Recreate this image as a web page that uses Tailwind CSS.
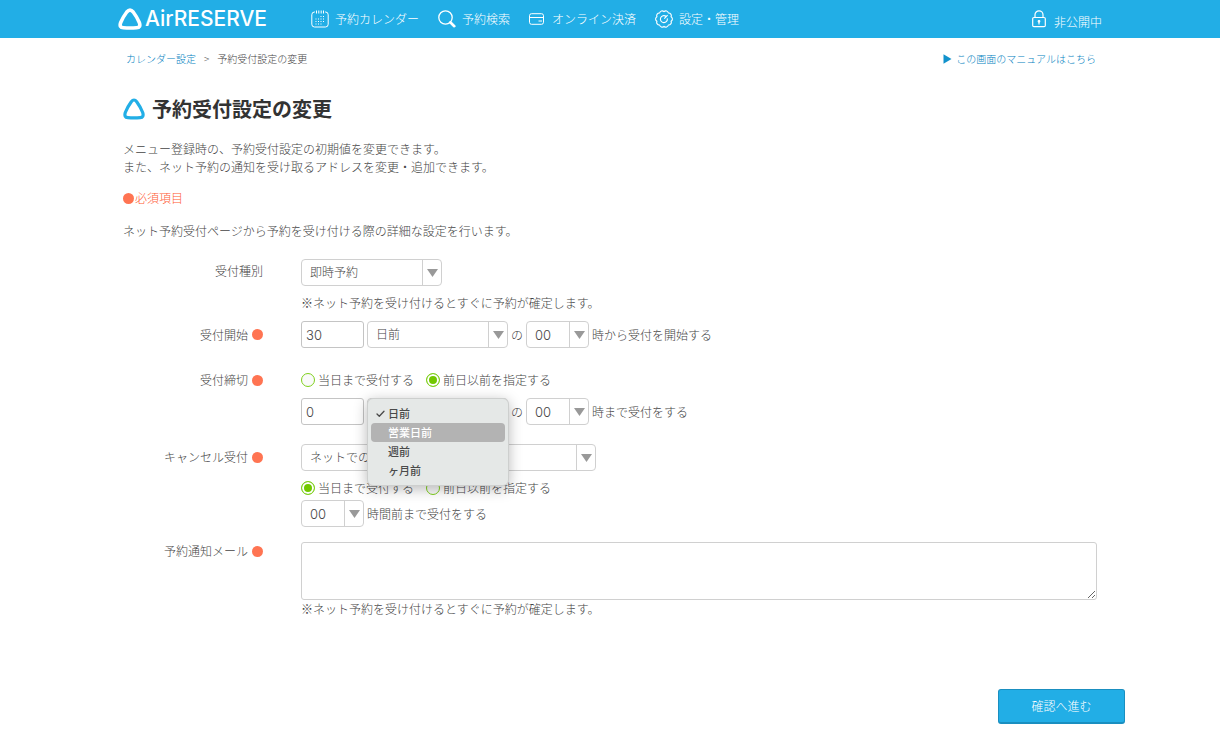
<!DOCTYPE html>
<html lang="ja">
<head>
<meta charset="utf-8">
<meta name="viewport" content="width=device-width, initial-scale=1">
<title>予約受付設定の変更 | AirRESERVE</title>
<script src="https://cdn.jsdelivr.net/npm/@tailwindcss/browser@4"></script>
</head>
<body class="bg-white font-['Noto_Sans_CJK_JP',sans-serif] text-[12px] leading-[18px] font-light text-[#444]">

<header class="bg-[#22aee6] text-white">
  <div class="mx-auto flex h-[38px] max-w-[984px] items-center">
    <a href="#" class="flex items-center gap-[3px]" aria-label="AirRESERVE">
      <svg class="h-[22px] w-6" viewBox="0 0 24 22" fill="none" stroke="currentColor" stroke-width="3.6" stroke-linejoin="round"><path d="M8.800 4Q12 .2 15.200 4Q19 9 21.300 14.500Q23.200 19.500 18.500 19.800Q12 20.300 5.500 19.800Q.8 19.500 2.700 14.500Q5 9 8.800 4Z"/></svg>
      <span class="font-['Inter'] text-[21px] leading-[24px] font-medium">AirRESERVE</span>
    </a>
    <nav class="ml-11 flex items-center gap-[19px] whitespace-nowrap">
      <a href="#" class="flex items-center gap-[6px]">
        <svg class="h-[18px] w-[18px]" viewBox="0 0 18 18" fill="none" stroke="currentColor" stroke-width="1"><path d="M4 2H3.500Q.8 2 .8 4.800V14.200Q.8 17 3.500 17H14.500Q17.200 17 17.200 14.200V4.800Q17.200 2 14.500 2H14"/><path d="M5.500 .5V3.500M7.800 .5V3.500M10.200 .5V3.500M12.500 .5V3.500"/><path d="M9.500 6.500H14M4.500 9H14M4.500 11.500H14M4.500 14H12" stroke-dasharray="1 1.500"/></svg>
        予約カレンダー</a>
      <a href="#" class="flex items-center gap-[6px]">
        <svg class="h-[18px] w-[18px]" viewBox="0 0 18 18" fill="none" stroke="currentColor"><circle cx="7.500" cy="7.500" r="6.700" stroke-width="1.300"/><path d="M12.300 12.300L16.300 16.200" stroke-width="2.600" stroke-linecap="round"/></svg>
        予約検索</a>
      <a href="#" class="flex items-center gap-[6px]">
        <svg class="h-[12px] w-[17px]" viewBox="0 0 17 12" fill="none" stroke="currentColor" stroke-width="1"><rect x=".5" y=".7" width="14" height="10.600" rx="2"/><path d="M.5 4.500H14.500M9.500 8H13"/></svg>
        オンライン決済</a>
      <a href="#" class="flex items-center gap-[6px]">
        <svg class="h-[18px] w-[18px]" viewBox="0 0 18 18" fill="none" stroke="currentColor" stroke-width="1.100" stroke-linejoin="round"><path d="M9 1.600A2.600 2.600 0 0 1 13.350 3.010A2.600 2.600 0 0 1 16.040 6.710A2.600 2.600 0 0 1 16.040 11.290A2.600 2.600 0 0 1 13.350 14.990A2.600 2.600 0 0 1 9 16.400A2.600 2.600 0 0 1 4.650 14.990A2.600 2.600 0 0 1 1.960 11.290A2.600 2.600 0 0 1 1.960 6.710A2.600 2.600 0 0 1 4.650 3.010A2.600 2.600 0 0 1 9 1.600Z"/><path d="M11 6.300A3.500 3.500 0 1 0 12.300 8.300M9.300 8.700L12.600 5.200"/></svg>
        設定・管理</a>
    </nav>
    <a href="#" class="ml-auto flex items-center gap-2 whitespace-nowrap">
      <svg class="h-[18px] w-[14px]" viewBox="0 0 14 18" fill="none" stroke="currentColor" stroke-width="1.200"><rect x=".7" y="7.500" width="12.600" height="9.200" rx="1.200"/><path d="M3 7.500V4.800A4 4 0 0 1 11 4.800V7.500"/><path d="M7 12V14.500"/><circle cx="7" cy="11.300" r=".8" fill="currentColor"/></svg>
      <span class="pt-[6px]">非公開中</span></a>
  </div>
</header>

<main class="mx-auto max-w-[974px]">
  <div class="flex items-center justify-between pt-[11px] pr-px pl-[3px] text-[10px] leading-[20px]">
    <nav class="flex gap-2" aria-label="パンくず">
      <a href="#" class="text-[#0080c0]">カレンダー設定</a><span>&gt;</span><span>予約受付設定の変更</span>
    </nav>
    <a href="#" class="flex items-center gap-1 text-[#0080c0]">
      <svg class="h-[10px] w-[9px]" viewBox="0 0 9 10" fill="#1292cc"><path d="M.5 .3L8.500 5L.5 9.700Z"/></svg>この画面のマニュアルはこちら</a>
  </div>

  <h1 class="mt-[25px] flex items-center gap-[7px] text-[20px] leading-[30px] font-bold text-[#333]">
    <svg class="h-[22px] w-[22px] text-[#22aee6]" viewBox="0 0 22 22" fill="none" stroke="currentColor" stroke-width="3.200" stroke-linejoin="round"><path d="M8.300 3.800Q11 .2 13.700 3.800Q17.500 9 19.700 14.500Q21.200 19.300 17.200 19.600Q11 20.100 4.800 19.600Q.8 19.300 2.300 14.500Q4.500 9 8.300 3.800Z"/></svg>
    予約受付設定の変更
  </h1>

  <p class="mt-4">メニュー登録時の、予約受付設定の初期値を変更できます。<br>また、ネット予約の通知を受け取るアドレスを変更・追加できます。</p>
  <p class="mt-[13px] flex items-center gap-px text-[#ff5a34]"><span class="h-[11px] w-[11px] rounded-full bg-[#ff7452]"></span>必須項目</p>
  <p class="mt-[15px]">ネット予約受付ページから予約を受け付ける際の詳細な設定を行います。</p>

  <form id="settings" class="mt-[19px]">
    <div class="grid grid-cols-[140px_1fr] gap-x-[38px]">
      <label for="type" class="text-right leading-[24px]">受付種別</label>
      <div>
        <div class="relative w-[141px]">
          <select id="type" class="block h-[27px] w-full appearance-none rounded-[4px] border border-[#d0d0d0] bg-white pb-px pl-2"><option>即時予約</option></select>
          <span class="pointer-events-none absolute inset-y-px right-px flex w-[19px] items-center justify-center border-l border-[#d0d0d0]"><svg class="h-2 w-[11px]" viewBox="0 0 11 8" fill="#999"><path d="M0 0H11L5.500 8Z"/></svg></span>
        </div>
        <p class="mt-2">※ネット予約を受け付けるとすぐに予約が確定します。</p>
      </div>
    </div>

    <div class="mt-[9px] grid grid-cols-[140px_1fr] gap-x-[38px]">
      <label for="start-num" class="flex h-[27px] items-center justify-end gap-1">受付開始<span class="h-[11px] w-[11px] rounded-full bg-[#ff7452]"></span></label>
      <div class="flex items-center gap-[3px]">
        <input id="start-num" type="text" value="30" class="h-[27px] w-[63px] rounded-[3px] border border-[#c4c4c4] pl-1 font-['Inter'] text-[13px]">
        <div class="relative w-[141px]">
          <select aria-label="受付開始の単位" class="block h-[27px] w-full appearance-none rounded-[4px] border border-[#d0d0d0] bg-white pb-px pl-2"><option>日前</option></select>
          <span class="pointer-events-none absolute inset-y-px right-px flex w-[19px] items-center justify-center border-l border-[#d0d0d0]"><svg class="h-2 w-[11px]" viewBox="0 0 11 8" fill="#999"><path d="M0 0H11L5.500 8Z"/></svg></span>
        </div>
        <span>の</span>
        <div class="relative w-[63px]">
          <select id="start-hour" class="block h-[27px] w-full appearance-none rounded-[4px] border border-[#d0d0d0] bg-white pl-2 font-['Inter'] text-[13px]"><option>00</option></select>
          <span class="pointer-events-none absolute inset-y-px right-px flex w-[19px] items-center justify-center border-l border-[#d0d0d0]"><svg class="h-2 w-[11px]" viewBox="0 0 11 8" fill="#999"><path d="M0 0H11L5.500 8Z"/></svg></span>
        </div>
        <label for="start-hour">時から受付を開始する</label>
      </div>
    </div>

    <div class="mt-[23px] grid grid-cols-[140px_1fr] gap-x-[38px]">
      <label for="end-num" class="flex h-[18px] items-center justify-end gap-1">受付締切<span class="h-[11px] w-[11px] rounded-full bg-[#ff7452]"></span></label>
      <div>
        <div class="flex gap-3">
          <label class="flex items-center gap-[3px]"><input type="radio" name="end" class="h-[14px] w-[14px] appearance-none rounded-full border border-[#7fd01c] bg-[#fafafa] checked:bg-[#72c800] checked:shadow-[inset_0_0_0_2px_white]">当日まで受付する</label>
          <label class="flex items-center gap-[3px]"><input type="radio" name="end" checked class="h-[14px] w-[14px] appearance-none rounded-full border border-[#7fd01c] bg-[#fafafa] checked:bg-[#72c800] checked:shadow-[inset_0_0_0_2px_white]">前日以前を指定する</label>
        </div>
        <div class="mt-[9px] flex items-center gap-[3px]">
          <input id="end-num" type="text" value="0" class="h-[27px] w-[63px] rounded-[3px] border border-[#c4c4c4] pl-1 font-['Inter'] text-[13px]">
          <div class="relative w-[141px]">
            <select aria-label="受付締切の単位" class="block h-[27px] w-full appearance-none rounded-[4px] border border-[#d0d0d0] bg-white pb-px pl-2"><option>日前</option></select>
            <ul role="listbox" aria-label="受付締切の単位" class="absolute top-0 left-0 z-10 w-[142px] rounded-[6px] border border-[#cdcfce] bg-[#e5e8e7] px-[3px] py-[5px] text-[11px] leading-[19px] font-medium text-[#4a4a4a] shadow-[0_3px_14px_rgba(0,0,0,0.28)]">
              <li role="option" aria-selected="true" class="flex items-center gap-[3px] pl-[5px]"><svg class="h-[9px] w-[9px]" viewBox="0 0 9 9" fill="none" stroke="currentColor" stroke-width="1.300" stroke-linecap="round" stroke-linejoin="round"><path d="M1 5L3.300 7.300L8 2.200"/></svg>日前</li>
              <li role="option" aria-selected="false" class="rounded-[4px] bg-[#b3b3b3] pl-[17px] text-white">営業日前</li>
              <li role="option" aria-selected="false" class="pl-[17px]">週前</li>
              <li role="option" aria-selected="false" class="pl-[17px]">ヶ月前</li>
            </ul>
          </div>
          <span>の</span>
          <div class="relative w-[63px]">
            <select id="end-hour" class="block h-[27px] w-full appearance-none rounded-[4px] border border-[#d0d0d0] bg-white pl-2 font-['Inter'] text-[13px]"><option>00</option></select>
            <span class="pointer-events-none absolute inset-y-px right-px flex w-[19px] items-center justify-center border-l border-[#d0d0d0]"><svg class="h-2 w-[11px]" viewBox="0 0 11 8" fill="#999"><path d="M0 0H11L5.500 8Z"/></svg></span>
          </div>
          <label for="end-hour">時まで受付をする</label>
        </div>
      </div>
    </div>

    <div class="mt-[19px] grid grid-cols-[140px_1fr] gap-x-[38px]">
      <label for="cancel" class="flex h-[26px] items-center justify-end gap-1">キャンセル受付<span class="h-[11px] w-[11px] rounded-full bg-[#ff7452]"></span></label>
      <div>
        <div class="relative w-[295px]">
          <select id="cancel" class="block h-[27px] w-full appearance-none rounded-[4px] border border-[#d0d0d0] bg-white pb-px pl-2"><option>ネットでの</option></select>
          <span class="pointer-events-none absolute inset-y-px right-px flex w-[19px] items-center justify-center border-l border-[#d0d0d0]"><svg class="h-2 w-[11px]" viewBox="0 0 11 8" fill="#999"><path d="M0 0H11L5.500 8Z"/></svg></span>
        </div>
        <div class="mt-2 flex gap-3">
          <label class="flex items-center gap-[3px]"><input type="radio" name="cancel-end" checked class="h-[14px] w-[14px] appearance-none rounded-full border border-[#7fd01c] bg-[#fafafa] checked:bg-[#72c800] checked:shadow-[inset_0_0_0_2px_white]">当日まで受付する</label>
          <label class="flex items-center gap-[3px]"><input type="radio" name="cancel-end" class="h-[14px] w-[14px] appearance-none rounded-full border border-[#7fd01c] bg-[#fafafa] checked:bg-[#72c800] checked:shadow-[inset_0_0_0_2px_white]">前日以前を指定する</label>
        </div>
        <div class="mt-[3px] flex items-center gap-[3px]">
          <div class="relative w-[63px]">
            <select id="cancel-hour" class="block h-[27px] w-full appearance-none rounded-[4px] border border-[#d0d0d0] bg-white pl-2 font-['Inter'] text-[13px]"><option>00</option></select>
            <span class="pointer-events-none absolute inset-y-px right-px flex w-[19px] items-center justify-center border-l border-[#d0d0d0]"><svg class="h-2 w-[11px]" viewBox="0 0 11 8" fill="#999"><path d="M0 0H11L5.500 8Z"/></svg></span>
          </div>
          <label for="cancel-hour">時間前まで受付をする</label>
        </div>
      </div>
    </div>

    <div class="mt-[15px] grid grid-cols-[140px_1fr] gap-x-[38px]">
      <label for="mail" class="flex h-[18px] items-center justify-end gap-1">予約通知メール<span class="h-[11px] w-[11px] rounded-full bg-[#ff7452]"></span></label>
      <div>
        <textarea id="mail" class="block h-[58px] w-full resize rounded-[3px] border border-[#d0d0d0] px-2 py-1"></textarea>
        <p>※ネット予約を受け付けるとすぐに予約が確定します。</p>
      </div>
    </div>
  </form>
</main>

<footer class="mx-auto mt-[71px] flex max-w-[1030px] justify-end">
  <button type="submit" form="settings" class="h-[35px] w-[127px] rounded-[3px] border border-b-2 border-[#1a8fc0] bg-[#22aee6] text-white">確認へ進む</button>
</footer>

</body>
</html>
